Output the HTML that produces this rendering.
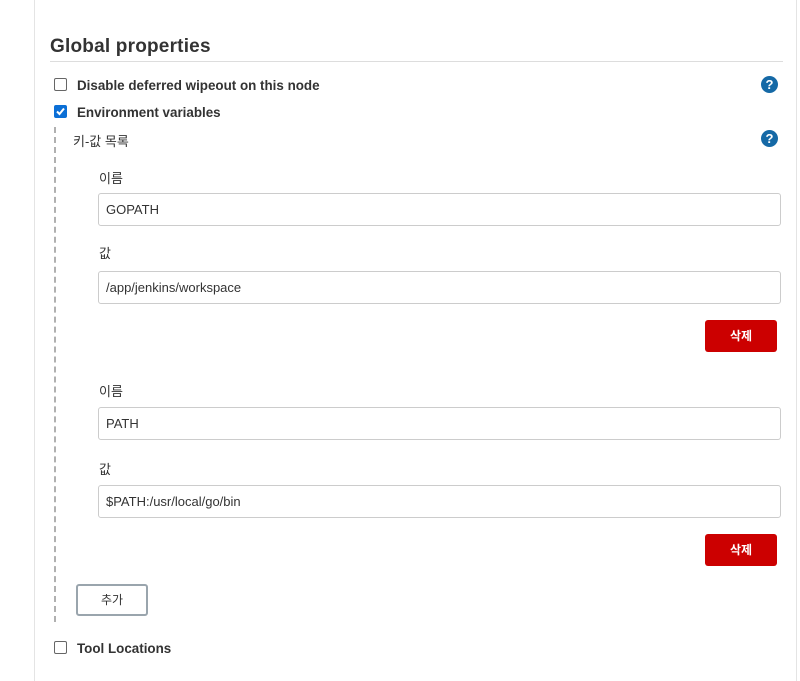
<!DOCTYPE html>
<html><head><meta charset="utf-8"><style>
*{box-sizing:border-box;margin:0;padding:0}
body{width:800px;height:681px;background:#fff;font-family:"Liberation Sans","Noto Sans CJK KR",sans-serif;color:#333;position:relative;overflow:hidden;font-size:13px}
.lb{position:absolute;left:34px;top:0;width:1px;height:681px;background:#e4e4e4}
.rb{position:absolute;left:796px;top:0;width:1px;height:681px;background:#e4e4e4}
h2{position:absolute;left:50px;top:36px;font-size:19px;font-weight:bold;color:#333;letter-spacing:0.2px}
.hr{position:absolute;left:50px;top:61px;width:733px;height:1px;background:#ddd}
.cb{position:absolute;width:13px;height:13px;border:1px solid #666;border-radius:2px;background:#fff}
.cb.on{background:#0b6fd6;border-color:#0b6fd6}
.lab{position:absolute;font-size:13.4px;font-weight:bold;color:#333}
.help{position:absolute;width:17px;height:17px;border-radius:50%;background:#1569a6;color:#fff;font-weight:bold;font-size:13px;text-align:center;line-height:17px}
.dash{position:absolute;left:54px;top:127px;height:495px;border-left:2px dashed #b0b0b0}
.t{position:absolute;font-size:13px;color:#333}
.in{position:absolute;left:98px;width:683px;height:33px;border:1px solid #ccc;border-radius:3px;padding-left:7px;line-height:31px;font-size:13px;color:#333}
.del{position:absolute;left:705px;width:72px;height:32px;background:#cc0000;border-radius:3px;color:#fff;font-size:12px;font-weight:bold;text-align:center;line-height:32px}
.add{position:absolute;left:76px;top:584px;width:72px;height:32px;border:2px solid #9aa5ad;border-radius:3px;text-align:center;line-height:28px;font-size:12px;color:#333}
</style></head><body>
<div class="lb"></div><div class="rb"></div>
<h2>Global properties</h2>
<div class="hr"></div>
<div class="cb" style="left:54px;top:78px"></div>
<div class="lab" style="left:77px;top:78px">Disable deferred wipeout on this node</div>
<div class="help" style="left:761px;top:76px">?</div>
<div class="cb on" style="left:54px;top:105px"><svg width="11" height="11" viewBox="0 0 11 11" style="position:absolute;left:0;top:0"><path d="M2 5.5L4.5 8L9 2.5" stroke="#fff" stroke-width="2" fill="none"/></svg></div>
<div class="lab" style="left:77px;top:105px">Environment variables</div>
<div class="dash"></div>
<div class="t" style="left:73px;top:131px">키-값 목록</div>
<div class="help" style="left:761px;top:130px">?</div>
<div class="t" style="left:99px;top:168px">이름</div>
<div class="in" style="top:193px">GOPATH</div>
<div class="t" style="left:99px;top:243px">값</div>
<div class="in" style="top:271px">/app/jenkins/workspace</div>
<div class="del" style="top:320px">삭제</div>
<div class="t" style="left:99px;top:381px">이름</div>
<div class="in" style="top:407px">PATH</div>
<div class="t" style="left:99px;top:459px">값</div>
<div class="in" style="top:485px">$PATH:/usr/local/go/bin</div>
<div class="del" style="top:534px">삭제</div>
<div class="add">추가</div>
<div class="cb" style="left:54px;top:641px"></div>
<div class="lab" style="left:77px;top:641px">Tool Locations</div>
</body></html>
